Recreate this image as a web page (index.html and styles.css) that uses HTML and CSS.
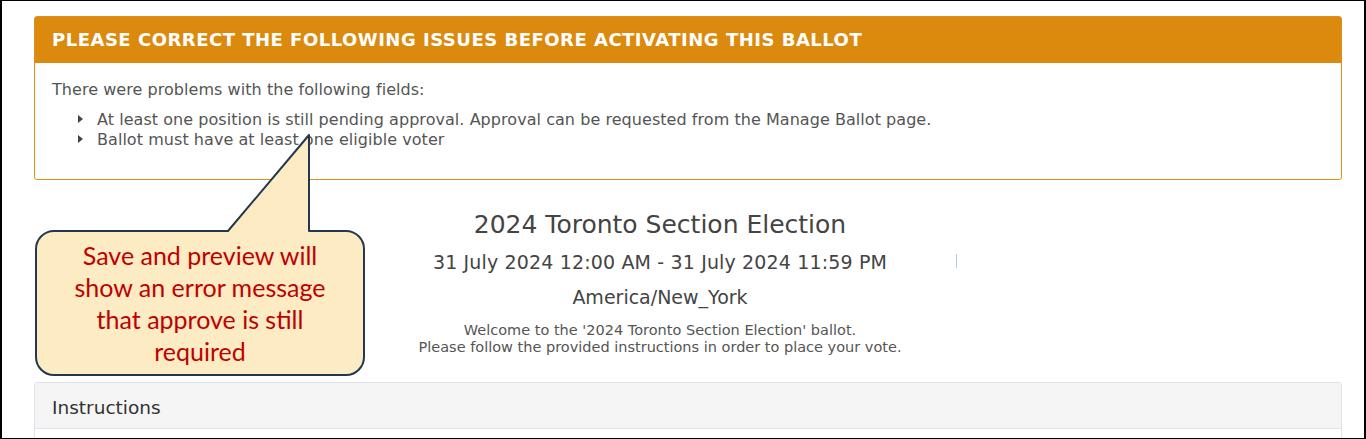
FILE: index.html
```html
<!DOCTYPE html>
<html lang="en">
<head>
    <meta charset="UTF-8">
    <meta name="viewport" content="width=device-width, initial-scale=1.0">
    <title>Ballot Preview</title>
    <link rel="stylesheet" href="styles.css">
</head>
<body>
    <div class="frame">
        <div class="alert">
            <div class="alert-head">PLEASE CORRECT THE FOLLOWING ISSUES BEFORE ACTIVATING THIS BALLOT</div>
            <div class="alert-body">
                <p>There were problems with the following fields:</p>
                <ul>
                    <li>At least one position is still pending approval. Approval can be requested from the Manage Ballot page.</li>
                    <li>Ballot must have at least one eligible voter</li>
                </ul>
            </div>
        </div>

        <div class="ballot-info">
            <h2>2024 Toronto Section Election</h2>
            <div class="dates">31 July 2024 12:00 AM - 31 July 2024 11:59 PM<span class="caret"></span></div>
            <div class="zone">America/New_York</div>
            <p class="welcome">Welcome to the '2024 Toronto Section Election' ballot.<br>Please follow the provided instructions in order to place your vote.</p>
        </div>

        <div class="panel">
            <div class="panel-head">Instructions</div>
            <div class="panel-body"></div>
        </div>

        <!-- annotation callout -->
        <div class="callout">
            <svg class="callout-shape" width="340" height="250" viewBox="0 0 340 250">
                <path d="M20 98 H194 L275 2 V98 H312 A18 18 0 0 1 330 116 V224 A18 18 0 0 1 312 242 H20 A18 18 0 0 1 2 224 V116 A18 18 0 0 1 20 98 Z"
                      fill="#fdebc4" stroke="#23384f" stroke-width="2" stroke-linejoin="round"/>
            </svg>
            <div class="callout-text">Save and preview will<br>show an error message<br>that approve is still<br>required</div>
        </div>
    </div>
</body>
</html>
```

FILE: styles.css
```css
* {
    box-sizing: border-box;
}
html, body {
    margin: 0;
    padding: 0;
    background: #fff;
}
body {
    font-family: "DejaVu Sans", Verdana, sans-serif;
    color: #555;
}
.frame {
    position: relative;
    width: 1366px;
    height: 439px;
    border: 1px solid #000;
    border-left-width: 2px;
    border-right-width: 2px;
    padding: 15px 22px 0 32px;
    overflow: hidden;
}

.alert {
    border: 1px solid #e0901a;
    border-radius: 3px;
    height: 164px;
}
.alert-head {
    background-color: #dc8a0e;
    color: #fff;
    font-weight: bold;
    font-size: 18px;
    line-height: 22px;
    height: 46px;
    padding: 12px 17px 0;
    letter-spacing: 0.5px;
}
.alert-body {
    padding: 17px 17px 0;
    font-size: 16px;
    line-height: 20px;
    letter-spacing: 0.05px;
}
.alert-body p {
    margin: 0 0 10px;
}
.alert-body ul {
    list-style: none;
    margin: 0;
    padding: 0 0 0 24px;
}
.alert-body li {
    position: relative;
    padding-left: 21px;
    line-height: 20px;
}
.alert-body li::before {
    content: "";
    position: absolute;
    left: 2px;
    top: 5px;
    border-left: 5px solid #444;
    border-top: 4px solid transparent;
    border-bottom: 4px solid transparent;
}

.ballot-info {
    text-align: center;
    color: #444;
    padding: 29px 56px 0 0;
}
.ballot-info h2 {
    font-weight: normal;
    font-size: 25px;
    margin: 0;
    line-height: 32px;
}
.dates {
    font-size: 19px;
    line-height: 24px;
    letter-spacing: 0.15px;
    margin-top: 9px;
    position: relative;
}
.caret {
    position: absolute;
    left: 922px;
    top: 4px;
    width: 1px;
    height: 14px;
    background: #a8cdee;
}
.zone {
    font-size: 19px;
    line-height: 24px;
    margin-top: 11px;
}
.welcome {
    font-size: 14.5px;
    line-height: 17px;
    margin: 13px 0 0;
    color: #555;
}

.panel {
    margin-top: 26px;
    border: 1px solid #dde3ea;
    border-radius: 3px 3px 0 0;
}
.panel-head {
    background-color: #f5f5f5;
    color: #333;
    font-size: 18.5px;
    line-height: 24px;
    height: 46px;
    padding: 13px 17px 0;
    border-bottom: 1px solid #dde3ea;
}
.panel-body {
    height: 20px;
}

.callout {
    position: absolute;
    left: 32px;
    top: 132px;
    width: 340px;
    height: 250px;
}
.callout-shape {
    position: absolute;
    left: 0;
    top: 0;
}
.callout-text {
    position: absolute;
    left: 2px;
    top: 106px;
    width: 328px;
    text-align: center;
    font-family: Lato, "Open Sans", sans-serif;
    font-size: 25px;
    line-height: 32px;
    color: #c00000;
}
```
